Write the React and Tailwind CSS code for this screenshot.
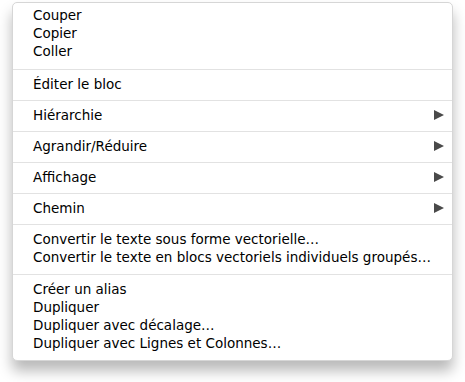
function Arrow() {
  return (
    <svg width="10" height="10" viewBox="0 0 10 10" className="text-[#4a4a4a]">
      <path d="M0 0 L10 5 L0 10 Z" fill="currentColor" />
    </svg>
  );
}

function Item({ label, sub }) {
  return (
    <div className="flex items-center justify-between h-[18px] pb-[2px] pl-[20px] pr-[8px]">
      <span>{label}</span>
      {sub && <Arrow />}
    </div>
  );
}

function Sep({ top = "mt-[6px]" }) {
  return <div className={"h-px bg-[#e2e2e2] mb-[6px] " + top} />;
}

export default function App() {
  return (
    <div className="w-[465px] h-[382px] bg-white pt-[2px] pl-[12px]">
      <div
        className="w-[441px] bg-white rounded-[5px] border border-[#d6d6d6] shadow-[0_10px_14px_rgba(0,0,0,0.28)] pt-[4px] pb-[7px] text-[13.5px] text-black leading-[18px]"
        style={{ fontFamily: '"DejaVu Sans", sans-serif' }}
      >
        <Item label="Couper" />
        <Item label="Copier" />
        <Item label="Coller" />
        <Sep top="mt-[8px]" />
        <Item label="Éditer le bloc" />
        <Sep />
        <Item label="Hiérarchie" sub />
        <Sep />
        <Item label="Agrandir/Réduire" sub />
        <Sep />
        <Item label="Affichage" sub />
        <Sep />
        <Item label="Chemin" sub />
        <Sep />
        <Item label="Convertir le texte sous forme vectorielle…" />
        <Item label="Convertir le texte en blocs vectoriels individuels groupés…" />
        <Sep top="mt-[7px]" />
        <Item label="Créer un alias" />
        <Item label="Dupliquer" />
        <Item label="Dupliquer avec décalage…" />
        <Item label="Dupliquer avec Lignes et Colonnes…" />
      </div>
    </div>
  );
}
